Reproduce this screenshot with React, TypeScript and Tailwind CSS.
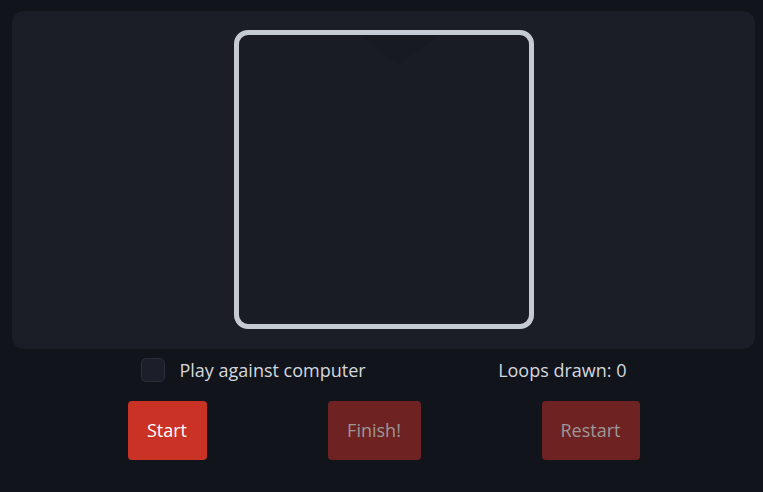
import React from "react";

export default function App() {
  return (
    <div
      className="w-[763px] h-[492px] bg-[#12141c] pt-[11px] pl-[12px] pr-[8px]"
      style={{ fontFamily: '"Open Sans", "Noto Sans", sans-serif' }}
    >
      <div className="relative h-[338px] rounded-[12px] bg-[#1b1d27] flex justify-center pt-[19px]">
        <div className="relative w-[300px] h-[299px] rounded-[14px] border-[5px] border-[#c5cad3] bg-[#1a1c25] overflow-hidden">
          <div className="absolute left-[120px] top-0 w-0 h-0 border-l-[40px] border-r-[40px] border-t-[30px] border-l-transparent border-r-transparent border-t-[#181a22]" />
        </div>
      </div>
      <div>
        <div className="mx-auto w-[486px] mt-[10px] h-[22px] flex items-center justify-between">
          <label className="flex items-center gap-[15px]">
            <span className="w-[24px] h-[24px] rounded-[5px] bg-[#1c1f2a] border border-[#2b2f3c]" />
            <span className="text-[18px] text-[#d4d8de] leading-none">Play against computer</span>
          </label>
          <span className="text-[18px] text-[#d4d8de] leading-none">Loops drawn: 0</span>
        </div>
        <div className="mt-[20px] flex justify-center gap-[121px]">
          <button className="w-[79px] h-[59px] rounded-[4px] bg-[#c93224] text-white text-[18px]">Start</button>
          <button className="w-[93px] h-[59px] rounded-[4px] bg-[#6e2222] text-[#9c9898] text-[18px]">Finish!</button>
          <button className="w-[98px] h-[59px] rounded-[4px] bg-[#6e2222] text-[#9c9898] text-[18px]">Restart</button>
        </div>
      </div>
    </div>
  );
}
